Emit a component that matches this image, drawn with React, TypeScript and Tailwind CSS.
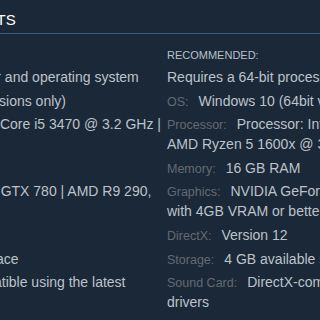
type Req = { label?: string; text: string };

const minimum: Req[] = [
  { text: "Requires a 64-bit processor and operating system" },
  { label: "OS:", text: "Windows 10 (64bit versions only)" },
  { label: "Processor:", text: "Processor: Intel Core i5 3470 @ 3.2 GHz | AMD FX 8350 @ 4.0 GHz" },
  { label: "Memory:", text: "8 GB RAM" },
  { label: "Graphics:", text: "NVIDIA GeForce GTX 780 | AMD R9 290, with 3GB VRAM" },
  { label: "DirectX:", text: "Version 11" },
  { label: "Storage:", text: "4 GB available space" },
  { label: "Sound Card:", text: "DirectX-compatible using the latest drivers" },
];

const recommended: Req[] = [
  { text: "Requires a 64-bit processor and operating system" },
  { label: "OS:", text: "Windows 10 (64bit versions only)" },
  { label: "Processor:", text: "Processor: Intel Core i7 4790 @ 3.6 GHz | AMD Ryzen 5 1600x @ 3.2 GHz" },
  { label: "Memory:", text: "16 GB RAM" },
  { label: "Graphics:", text: "NVIDIA GeForce GTX 970 | AMD R9 390, with 4GB VRAM or better" },
  { label: "DirectX:", text: "Version 12" },
  { label: "Storage:", text: "4 GB available space" },
  { label: "Sound Card:", text: "DirectX-compatible using the latest drivers" },
];

function ReqColumn({ title, items }: { title: string; items: Req[] }) {
  return (
    <div>
      <div className="text-[11px] leading-[16px] text-[#b8c0c8] uppercase">{title}</div>
      <ul className="mt-[4px] flex flex-col gap-[3.6px]">
        {items.map((item, i) => (
          <li key={i} className="text-[14px] leading-[20px] text-[#bcc3ca]">
            {item.label && (
              <span className="text-[12.5px] leading-none text-[#636a71] mr-[10px]">{item.label}</span>
            )}
            {item.text}
          </li>
        ))}
      </ul>
    </div>
  );
}

export default function App() {
  return (
    <div
      className="w-[320px] h-[320px] overflow-hidden bg-[#1b2838]"
      style={{ fontFamily: '"Liberation Sans", Arial, sans-serif' }}
    >
      <div className="w-[700px] ml-[-171px]">
        {/* header */}
        <h2 className="pt-[10px] pb-[3px] border-b border-[#335f7d] text-[15px] leading-[20px] text-white uppercase">
          System Requirements
        </h2>

        <div className="mt-[13px] grid grid-cols-[338px_338px]">
          <ReqColumn title="Minimum:" items={minimum} />
          <ReqColumn title="Recommended:" items={recommended} />
        </div>
      </div>
    </div>
  );
}
